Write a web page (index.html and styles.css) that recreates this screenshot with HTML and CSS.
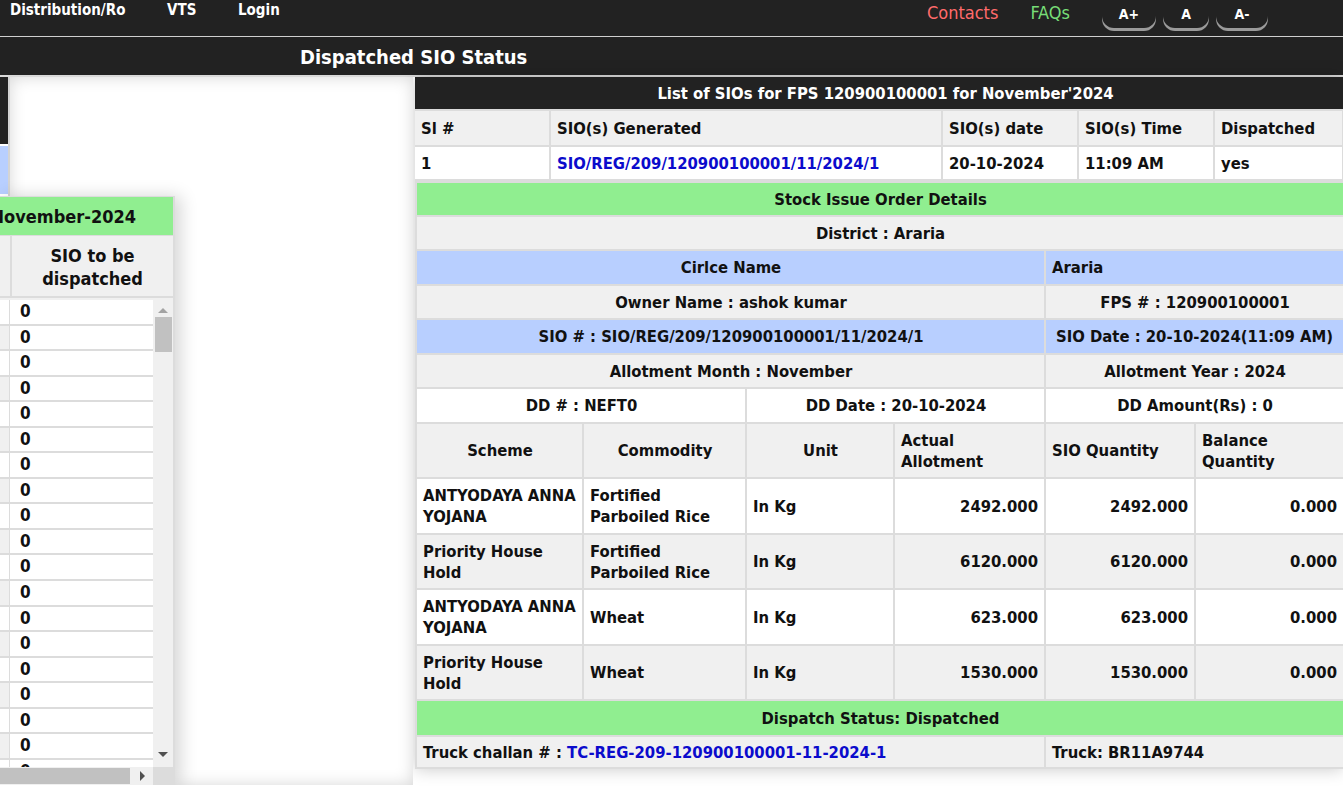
FILE: index.html
```html
<!DOCTYPE html>
<html lang="en">
<head>
<meta charset="utf-8">
<title>Dispatched SIO Status</title>
<link rel="stylesheet" href="styles.css">
</head>
<body>
<nav class="topnav">
  <ul class="menu">
    <li class="menu-item item-dist">Distribution/Ro</li>
    <li class="menu-item item-vts">VTS</li>
    <li class="menu-item">Login</li>
  </ul>
  <div class="tools">
    <a class="contacts" href="#">Contacts</a>
    <a class="faqs" href="#">FAQs</a>
    <div class="fontbtns">
      <span class="fbtn fbtn-plus">A+</span>
      <span class="fbtn fbtn-normal">A</span>
      <span class="fbtn fbtn-minus">A-</span>
    </div>
  </div>
</nav>
<header class="titlebar"><h1>Dispatched SIO Status</h1></header>
<main class="stage">
  <section class="leftcol">
    <div class="strip"><div class="strip-dark"></div><div class="strip-blue"></div></div>
    <div class="veil"></div>
    <div class="fpspanel">
      <div class="fps-title"><span>Dispatch status of FPS for November-2024</span></div>
      <div class="fps-head"><div class="fps-head-a"></div><div class="fps-head-b">SIO to be dispatched</div></div>
      <div class="fps-body">
        <div class="fps-rows">
          <div class="fps-row"><span class="c-a"></span><span class="c-b">0</span></div>
          <div class="fps-row alt"><span class="c-a"></span><span class="c-b">0</span></div>
          <div class="fps-row"><span class="c-a"></span><span class="c-b">0</span></div>
          <div class="fps-row alt"><span class="c-a"></span><span class="c-b">0</span></div>
          <div class="fps-row"><span class="c-a"></span><span class="c-b">0</span></div>
          <div class="fps-row alt"><span class="c-a"></span><span class="c-b">0</span></div>
          <div class="fps-row"><span class="c-a"></span><span class="c-b">0</span></div>
          <div class="fps-row alt"><span class="c-a"></span><span class="c-b">0</span></div>
          <div class="fps-row"><span class="c-a"></span><span class="c-b">0</span></div>
          <div class="fps-row alt"><span class="c-a"></span><span class="c-b">0</span></div>
          <div class="fps-row"><span class="c-a"></span><span class="c-b">0</span></div>
          <div class="fps-row alt"><span class="c-a"></span><span class="c-b">0</span></div>
          <div class="fps-row"><span class="c-a"></span><span class="c-b">0</span></div>
          <div class="fps-row alt"><span class="c-a"></span><span class="c-b">0</span></div>
          <div class="fps-row"><span class="c-a"></span><span class="c-b">0</span></div>
          <div class="fps-row alt"><span class="c-a"></span><span class="c-b">0</span></div>
          <div class="fps-row"><span class="c-a"></span><span class="c-b">0</span></div>
          <div class="fps-row alt"><span class="c-a"></span><span class="c-b">0</span></div>
          <div class="fps-row"><span class="c-a"></span><span class="c-b">0</span></div>
        </div>
        <div class="vscroll">
          <svg class="arrow" width="10" height="6" viewBox="0 0 10 6"><path d="M0 6 L5 1 L10 6 Z" fill="#a3a3a3"/></svg>
          <div class="vthumb"></div>
          <div class="vspace"></div>
          <svg class="arrow" width="10" height="6" viewBox="0 0 10 6"><path d="M0 0 L5 5 L10 0 Z" fill="#505050"/></svg>
        </div>
      </div>
      <div class="hscroll">
        <div class="hthumb"></div>
        <svg class="harrow" width="6" height="10" viewBox="0 0 6 10"><path d="M0 0 L5 5 L0 10 Z" fill="#505050"/></svg>
        <div class="corner"></div>
      </div>
    </div>
  </section>
  <section class="detail">
    <table class="siolist">
      <colgroup><col class="w135"><col class="w392"><col class="w136"><col class="w136"><col class="w129"></colgroup>
      <tr class="row-title"><th colspan="5">List of SIOs for FPS 120900100001 for November'2024</th></tr>
      <tr class="row-head"><td>Sl #</td><td>SIO(s) Generated</td><td>SIO(s) date</td><td>SIO(s) Time</td><td>Dispatched</td></tr>
      <tr class="row-data"><td>1</td><td><a class="link" href="#">SIO/REG/209/120900100001/11/2024/1</a></td><td>20-10-2024</td><td>11:09 AM</td><td>yes</td></tr>
    </table>
    <table class="sio">
      <colgroup><col class="w167"><col class="w163"><col class="w148"><col class="w151"><col class="w150"><col class="w149"></colgroup>
      <tr class="green h34"><td colspan="6" class="center">Stock Issue Order Details</td></tr>
      <tr class="grey h34"><td colspan="6" class="center">District : Araria</td></tr>
      <tr class="blue h35"><td colspan="4" class="center">Cirlce Name</td><td colspan="2">Araria</td></tr>
      <tr class="grey h34"><td colspan="4" class="center">Owner Name : ashok kumar</td><td colspan="2" class="center">FPS # : 120900100001</td></tr>
      <tr class="blue h35"><td colspan="4" class="center">SIO # : SIO/REG/209/120900100001/11/2024/1</td><td colspan="2" class="center tight">SIO Date : 20-10-2024(11:09 AM)</td></tr>
      <tr class="grey h34"><td colspan="4" class="center">Allotment Month : November</td><td colspan="2" class="center">Allotment Year : 2024</td></tr>
      <tr class="white h35"><td colspan="2" class="center">DD # : NEFT0</td><td colspan="2" class="center">DD Date : 20-10-2024</td><td colspan="2" class="center">DD Amount(Rs) : 0</td></tr>
      <tr class="grey h55"><td class="center">Scheme</td><td class="center">Commodity</td><td class="center">Unit</td><td>Actual Allotment</td><td>SIO Quantity</td><td>Balance Quantity</td></tr>
      <tr class="white h56"><td>ANTYODAYA ANNA YOJANA</td><td>Fortified Parboiled Rice</td><td>In Kg</td><td class="num">2492.000</td><td class="num">2492.000</td><td class="num">0.000</td></tr>
      <tr class="grey h55"><td>Priority House Hold</td><td>Fortified Parboiled Rice</td><td>In Kg</td><td class="num">6120.000</td><td class="num">6120.000</td><td class="num">0.000</td></tr>
      <tr class="white h56"><td>ANTYODAYA ANNA YOJANA</td><td>Wheat</td><td>In Kg</td><td class="num">623.000</td><td class="num">623.000</td><td class="num">0.000</td></tr>
      <tr class="grey h55"><td>Priority House Hold</td><td>Wheat</td><td>In Kg</td><td class="num">1530.000</td><td class="num">1530.000</td><td class="num">0.000</td></tr>
      <tr class="green h36"><td colspan="6" class="center">Dispatch Status: Dispatched</td></tr>
      <tr class="grey h32"><td colspan="4">Truck challan # : <a class="link" href="#">TC-REG-209-120900100001-11-2024-1</a></td><td colspan="2">Truck: BR11A9744</td></tr>
    </table>
  </section>
</main>
</body>
</html>
```
FILE: styles.css
```css
* { box-sizing: border-box; }
html, body { margin: 0; padding: 0; }
body {
  width: 1343px;
  height: 786px;
  overflow: hidden;
  background: #fff;
  font-family: "DejaVu Sans Condensed", "DejaVu Sans", sans-serif;
  font-weight: bold;
  color: #111;
}

/* top navigation */
.topnav {
  height: 37px;
  background: #222;
  border-bottom: 1px solid #cfcfcf;
  display: flex;
  align-items: flex-start;
}
.menu {
  list-style: none;
  margin: 0;
  padding: 1px 0 0 10px;
  display: flex;
}
.menu-item {
  color: #fff;
  font-size: 15px;
  line-height: 19px;
}
.item-dist { width: 157px; }
.item-vts { width: 71px; }
.tools {
  margin-left: auto;
  margin-right: 75px;
  display: flex;
  align-items: flex-start;
}
.contacts, .faqs {
  font-weight: normal;
  font-size: 18px;
  line-height: 20px;
  padding-top: 3px;
  text-decoration: none;
}
.contacts { color: #ff6b6b; margin-right: 32px; }
.faqs { color: #77dd77; margin-right: 32px; }
.fontbtns { display: flex; gap: 7px; }
.fbtn {
  height: 28px;
  background: #222;
  color: #fff;
  font-size: 14px;
  line-height: 29px;
  text-align: center;
  border-radius: 0 0 12px 12px;
  box-shadow: 0 3px 0 #9a9a9a;
}
.fbtn-plus { width: 54px; }
.fbtn-normal { width: 46px; }
.fbtn-minus { width: 52px; }

/* title bar */
.titlebar {
  height: 40px;
  background: #222;
  border-bottom: 2px solid #d9d9d9;
}
.titlebar h1 {
  margin: 0;
  padding-left: 300px;
  color: #fff;
  font-size: 20px;
  line-height: 40px;
}

/* stage */
.stage {
  display: grid;
  grid-template-columns: 415px 928px;
  height: 708px;
}
.leftcol {
  position: relative;
  display: flex;
  overflow: hidden;
}
.strip {
  width: 10px;
  border-right: 2px solid #d4d4d4;
  display: flex;
  flex-direction: column;
}
.strip-dark { height: 67px; background: #222; }
.strip-blue { height: 48px; margin-top: 2px; background: #b8cfff; }
.veil {
  flex: 1;
  margin-right: 2px;
  background: #fff;
  box-shadow: inset 0 0 16px rgba(0, 0, 0, 0.16);
}

/* left FPS panel (overlay) */
.fpspanel {
  position: absolute;
  left: 0;
  top: 119px;
  width: 175px;
  bottom: 0;
  background: #f0f0f0;
  border-right: 2px solid #dcdcdc;
  border-top: 1px solid #dcdcdc;
  box-shadow: 6px 0 16px rgba(0, 0, 0, 0.16);
  display: flex;
  flex-direction: column;
}
.fps-title {
  height: 39px;
  background: #90ee90;
  display: flex;
  justify-content: flex-end;
  align-items: center;
  overflow: hidden;
  padding-right: 37px;
  border-bottom: 1px solid #dcdcdc;
}
.fps-title span {
  white-space: nowrap;
  font-size: 18px;
  flex-shrink: 0;
}
.fps-head {
  height: 62px;
  display: flex;
  border-bottom: 2px solid #dcdcdc;
}
.fps-head-a { width: 12px; border-right: 2px solid #dcdcdc; }
.fps-head-b {
  flex: 1;
  font-size: 18px;
  line-height: 23px;
  text-align: center;
  padding: 8px 8px 0;
}
.fps-body {
  flex: 1;
  display: flex;
  overflow: hidden;
}
.fps-rows {
  width: 153px;
  overflow: hidden;
  display: flex;
  flex-direction: column;
  padding-top: 2px;
}
.fps-row {
  flex: 0 0 25.55px;
  min-height: 0;
  display: flex;
  border-bottom: 2px solid #dcdcdc;
  background: #fff;
}
.fps-row.alt .c-a { background: #f0f0f0; }
.c-a { width: 10px; border-right: 1px solid #dcdcdc; }
.c-b {
  flex: 1;
  font-size: 17px;
  line-height: 23px;
  padding-left: 10px;
  background: #fff;
}
.vscroll {
  width: 20px;
  display: flex;
  flex-direction: column;
  align-items: center;
  padding-top: 9px;
  background: #f0f0f0;
}
.vthumb {
  width: 17px;
  height: 35px;
  margin-top: 4px;
  background: #c1c1c1;
}
.vspace { flex: 1; }
.vscroll .arrow:last-child { margin-bottom: 9px; }
.hscroll {
  height: 18px;
  display: flex;
  align-items: center;
  background: #f0f0f0;
}
.hthumb { width: 130px; height: 16px; background: #c1c1c1; }
.harrow { margin-left: 10px; }
.corner { margin-left: auto; width: 20px; height: 18px; background: #dcdcdc; }

/* detail tables */
.detail {
  box-shadow: 0 0 16px rgba(0, 0, 0, 0.22);
  align-self: start;
  background: #fff;
}
table {
  border-collapse: collapse;
  table-layout: fixed;
  width: 928px;
  font-size: 16.5px;
  line-height: 21px;
}
td, th {
  border: 2px solid #dcdcdc;
  padding: 0 5px 0 6px;
  font-weight: bold;
  text-align: left;
  vertical-align: middle;
}
.w135 { width: 135px; } .w392 { width: 392px; } .w136 { width: 136px; } .w129 { width: 129px; }
.w167 { width: 167px; } .w163 { width: 163px; } .w148 { width: 148px; } .w151 { width: 151px; } .w150 { width: 150px; } .w149 { width: 149px; }

.row-title th {
  background: #222;
  color: #fff;
  border: none;
  height: 33px;
  text-align: center;
  padding-left: 18px;
}
.siolist td:first-child { border-left: none; }
.row-head td { background: #f0f0f0; height: 36px; }
.row-data td { background: #fff; height: 34px; }
.link { color: #0b0bcc; text-decoration: none; }

.green td { background: #90ee90; }
.grey td { background: #f0f0f0; }
.blue td { background: #b8cfff; }
.white td { background: #fff; }
.h32 td { height: 32px; }
.h34 td { height: 34px; }
.h35 td { height: 35px; }
.h36 td { height: 36px; }
.h55 td { height: 55px; }
.h56 td { height: 56px; }
.center { text-align: center; }
.tight { padding: 0 2px; }
.num { text-align: right; padding-right: 6px; }
```
